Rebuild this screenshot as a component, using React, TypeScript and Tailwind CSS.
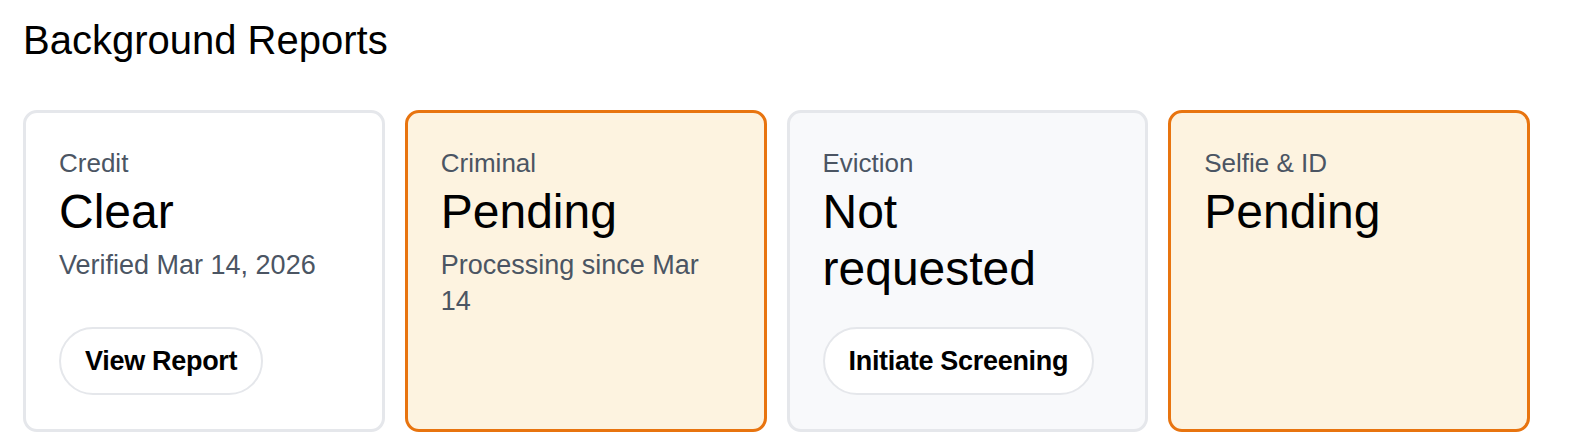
import React from "react";

type Card = {
  label: string;
  value: string;
  sub?: string;
  action?: string;
  tone: "white" | "pending" | "muted";
};

const cards: Card[] = [
  { label: "Credit", value: "Clear", sub: "Verified Mar 14, 2026", action: "View Report", tone: "white" },
  { label: "Criminal", value: "Pending", sub: "Processing since Mar 14", tone: "pending" },
  { label: "Eviction", value: "Not requested", action: "Initiate Screening", tone: "muted" },
  { label: "Selfie & ID", value: "Pending", tone: "pending" },
];

const toneClass: Record<Card["tone"], string> = {
  white: "bg-white border-[#e5e7eb]",
  pending: "bg-[#fdf3e0] border-[#e8740f]",
  muted: "bg-[#f8f9fb] border-[#e5e7eb]",
};

export default function App() {
  return (
    <div
      className="w-[1570px] h-[448px] bg-white pt-[16px] pl-[23px] pr-[40px] text-black"
      style={{ fontFamily: '"Liberation Sans", Arial, sans-serif' }}
    >
      <h1 className="text-[40px] leading-[48px] font-normal">Background Reports</h1>
      <div className="mt-[46px] grid grid-cols-4 gap-[20px]">
        {cards.map((c) => (
          <div
            key={c.label}
            className={`flex flex-col rounded-[14px] border-[3px] px-[33px] pt-[32px] pb-[34px] ${toneClass[c.tone]}`}
          >
            <div className="text-[26px] leading-[36px] text-[#4b5563]">{c.label}</div>
            <div className="mt-[2px] text-[48px] leading-[57px] text-black">{c.value}</div>
            {c.sub && (
              <div className="mt-[7px] text-[27px] leading-[36px] text-[#4b5563] pr-[20px]">{c.sub}</div>
            )}
            {c.action && (
              <div className="mt-auto pt-[30px]">
                <button className="h-[68px] rounded-full border-2 border-[#e5e7eb] bg-white px-[24px] text-[27px] font-semibold text-black tracking-[-0.3px]">
                  {c.action}
                </button>
              </div>
            )}
          </div>
        ))}
      </div>
    </div>
  );
}
